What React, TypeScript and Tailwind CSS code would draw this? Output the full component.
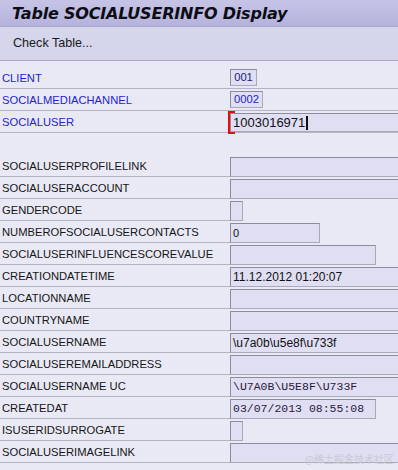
import React from 'react';

type Row = {
  label: string;
  value?: string;
  width: number | 'full';
  mono?: boolean;
};

const ROWS: Row[] = [
  { label: 'SOCIALUSERPROFILELINK', width: 'full' },
  { label: 'SOCIALUSERACCOUNT', width: 'full' },
  { label: 'GENDERCODE', width: 13 },
  { label: 'NUMBEROFSOCIALUSERCONTACTS', value: '0', width: 90 },
  { label: 'SOCIALUSERINFLUENCESCOREVALUE', width: 146 },
  { label: 'CREATIONDATETIME', value: '11.12.2012 01:20:07', width: 'full' },
  { label: 'LOCATIONNAME', width: 'full' },
  { label: 'COUNTRYNAME', width: 'full' },
  { label: 'SOCIALUSERNAME', value: '\\u7a0b\\u5e8f\\u733f', width: 'full' },
  { label: 'SOCIALUSEREMAILADDRESS', width: 'full' },
  { label: 'SOCIALUSERNAME UC', value: '\\U7A0B\\U5E8F\\U733F', width: 'full', mono: true },
  { label: 'CREATEDAT', value: '03/07/2013 08:55:08', width: 146, mono: true },
  { label: 'ISUSERIDSURROGATE', width: 13 },
  { label: 'SOCIALUSERIMAGELINK', width: 'full' },
];

const box =
  'h-full border border-t-[#8c8c9a] border-l-[#8c8c9a] border-r-[#a9a9b8] border-b-[#a9a9b8] bg-[#dfdef3] flex items-center';

const Field: React.FC<{ row: Row }> = ({ row }) => (
  <div
    className={box + (row.width === 'full' ? ' flex-1 -mr-2' : '')}
    style={row.width === 'full' ? undefined : { width: row.width }}
  >
    {row.value && (
      <span
        className={
          row.mono
            ? "pl-[2px] text-[11.5px] text-[#2a1a3a] font-['Liberation_Mono',monospace]"
            : row.value.length > 2
              ? 'pl-[2px] text-[12px] text-[#111]'
              : 'pl-[2px] text-[11px] text-[#111]'
        }
      >
        {row.value}
      </span>
    )}
  </div>
);

export default function App() {
  return (
    <div className="w-[398px] h-[470px] overflow-hidden bg-[#e9e9f5] font-['Liberation_Sans',sans-serif] text-[11.2px] text-[#161616] relative">
      <div className="h-[27px] border-b border-[#a8a6cf] bg-gradient-to-b from-[#c6c4e6] to-[#b5b3db] flex items-center pl-[12px] pt-[1px]">
        <span className="font-['DejaVu_Sans',sans-serif] font-bold italic text-[16px] tracking-[-0.2px] text-[#0d0d16]">
          Table SOCIALUSERINFO Display
        </span>
      </div>
      <div className="h-[34px] border-b border-[#a9a9c6] bg-[#d5d5eb] flex items-center pl-[13px] text-[12.6px] text-[#1a1a1a]">
        Check Table...
      </div>

      <div className="pt-[6px]">
        <div className="h-[22px] flex border-b border-[#b3b3c1]">
          <div className="w-[230px] pl-[2px] pt-[2px] flex items-center text-[#2424cc]">CLIENT</div>
          <div className="pt-[2px] h-[19px]">
            <div className={box + ' w-[27px] h-[17px] justify-center text-[#202080]'}>001</div>
          </div>
        </div>
        <div className="h-[22px] flex border-b border-[#b3b3c1]">
          <div className="w-[230px] pl-[2px] pt-[2px] flex items-center text-[#2424cc]">SOCIALMEDIACHANNEL</div>
          <div className="pt-[2px] h-[19px]">
            <div className={box + ' w-[33px] h-[17px] justify-center text-[#2424cc]'}>0002</div>
          </div>
        </div>
        <div className="h-[22px] flex border-b border-[#b3b3c1]">
          <div className="w-[230px] pl-[2px] pt-[2px] flex items-center text-[#2424cc] relative">
            SOCIALUSER
            <div className="absolute z-10 right-[-5px] top-0 w-[7px] h-[23px] border-l-2 border-t-2 border-b-2 border-[#e01010]" />
          </div>
          <div className="flex-1 pt-[2px] -mr-2">
            <div className={box + ' h-[20px] text-[13px] text-[#111] pl-[2px]'}>
              1003016971
              <span className="ml-[1px] inline-block w-[2px] h-[14px] bg-[#111]" />
            </div>
          </div>
        </div>

        <div className="h-[22px]" />

        {ROWS.map((row) => (
          <div key={row.label} className="h-[22px] flex">
            <div className="w-[230px] shrink-0 h-[22px] pl-[2px] pt-[2px] flex items-center border-b border-[#b3b3c1]">
              {row.label}
            </div>
            <div className="flex-1 flex pt-[2px] h-[22px]">
              <Field row={row} />
            </div>
          </div>
        ))}
      </div>

      <div className="absolute right-[4px] bottom-[4px] text-[10px] text-[#c9c9d2] font-['Noto_Sans_CJK_SC',sans-serif]">
        @稀土掘金技术社区
      </div>
    </div>
  );
}
